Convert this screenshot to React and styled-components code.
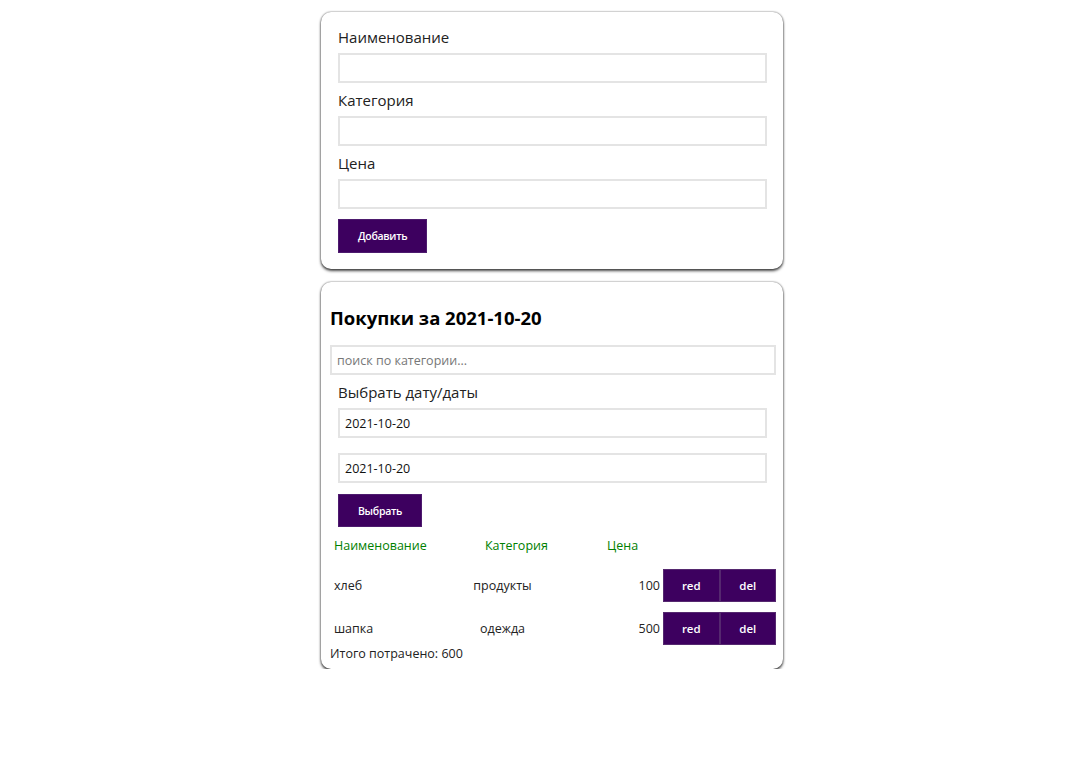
import React from 'react';
import styled, { createGlobalStyle } from 'styled-components';

const GlobalStyle = createGlobalStyle`
	body {
		margin: 0;
		background: #fff;
		font-family: "Open Sans", "Noto Sans", sans-serif;
		color: #222;
	}
`;

/**
 * Page and cards
 */
const Page = styled.main`
	width: 462px;
	padding: 12px 0 0 321px;
	display: flex;
	flex-direction: column;
	gap: 13px;
`;

const Card = styled.section`
	background: #fff;
	border-radius: 10px;
	padding: 8px 7px 8px 9px;
	box-shadow: 0 0 2px rgba(0, 0, 0, 0.6), 0 2px 3px rgba(0, 0, 0, 0.7);
`;

const Form = styled.div`
	padding: ${props => props.top}px 9px 8px 8px;
	display: flex;
	flex-direction: column;
`;

const Label = styled.label`
	font-size: 15px;
	line-height: 21px;
	color: #222;
	margin: ${props => props.first ? '0' : '7px'} 0 5px 0;
`;

const Input = styled.input`
	box-sizing: border-box;
	width: 100%;
	height: ${props => props.h || 30}px;
	margin: 0 0 ${props => props.mb || 0}px 0;
	border: 2px solid #e4e4e4;
	outline: none;
	padding: 0 5px;
	font-family: "Open Sans", "Noto Sans", sans-serif;
	font-size: 12.5px;
	color: #111;
	background: #fff;

	&::placeholder {
		color: #777;
	}
`;

const Button = styled.button`
	align-self: flex-start;
	height: ${props => props.h}px;
	margin-top: ${props => props.mt}px;
	padding: 0 19px;
	border: 1px solid #4d1b6e;
	background: #3d005f;
	color: #fff;
	font-family: "Open Sans", "Noto Sans", sans-serif;
	font-size: 10.5px;
	font-weight: 600;
	letter-spacing: -0.3px;
	cursor: pointer;
`;

const Title = styled.h2`
	margin: 16px 0 15px 0;
	font-size: 18.5px;
	line-height: 24px;
	font-weight: 700;
	color: #000;
`;

/**
 * Table of purchases
 */
const HeadRow = styled.div`
	display: grid;
	grid-template-columns: 151px 122px auto;
	padding-left: 4px;
	margin-top: 1px;
	font-size: 12.5px;
	line-height: 20px;
	color: #008000;
`;

const Row = styled.div`
	display: grid;
	grid-template-columns: 110px 125px 98px 113px;
	align-items: center;
	height: 33px;
	margin-top: ${props => props.mt}px;
	font-size: 12.5px;
	color: #222;
`;

const Cell = styled.div`
	text-align: ${props => props.align || 'left'};
	padding: 0 ${props => props.pr || 0}px 0 ${props => props.pl || 0}px;
`;

const Actions = styled.div`
	display: flex;
	height: 100%;
`;

const SmallButton = styled.button`
	flex: 1;
	height: 100%;
	border: 1px solid #55286f;
	background: #3d005f;
	color: #fff;
	font-family: "Open Sans", "Noto Sans", sans-serif;
	font-size: 11.5px;
	font-weight: 600;
	cursor: pointer;
`;

const Total = styled.div`
	font-size: 12.5px;
	line-height: 15px;
	margin-top: 1px;
	color: #222;
`;

const purchases = [
	{ name: 'хлеб', category: 'продукты', price: 100 },
	{ name: 'шапка', category: 'одежда', price: 500 },
];

export default function App() {
	const total = purchases.reduce((sum, p) => sum + p.price, 0);

	return (
		<>
			<GlobalStyle />
			<Page>
				<Card>
					<Form top={7}>
						<Label first>Наименование</Label>
						<Input />
						<Label>Категория</Label>
						<Input />
						<Label>Цена</Label>
						<Input />
						<Button h={34} mt={10}>Добавить</Button>
					</Form>
				</Card>

				<Card>
					<Title>Покупки за 2021-10-20</Title>
					<Input placeholder="поиск по категории..." />
					<Form top={7}>
						<Label first>Выбрать дату/даты</Label>
						<Input defaultValue="2021-10-20" mb={15} />
						<Input defaultValue="2021-10-20" />
						<Button h={33} mt={11}>Выбрать</Button>
					</Form>
					<HeadRow>
						<span>Наименование</span>
						<span>Категория</span>
						<span>Цена</span>
					</HeadRow>
					{purchases.map((p, i) => (
						<Row key={p.name} mt={i === 0 ? 13 : 10}>
							<Cell pl={4}>{p.name}</Cell>
							<Cell align="center">{p.category}</Cell>
							<Cell align="right" pr={3}>{p.price}</Cell>
							<Actions>
								<SmallButton>red</SmallButton>
								<SmallButton>del</SmallButton>
							</Actions>
						</Row>
					))}
					<Total>Итого потрачено: {total}</Total>
				</Card>
			</Page>
		</>
	);
}
